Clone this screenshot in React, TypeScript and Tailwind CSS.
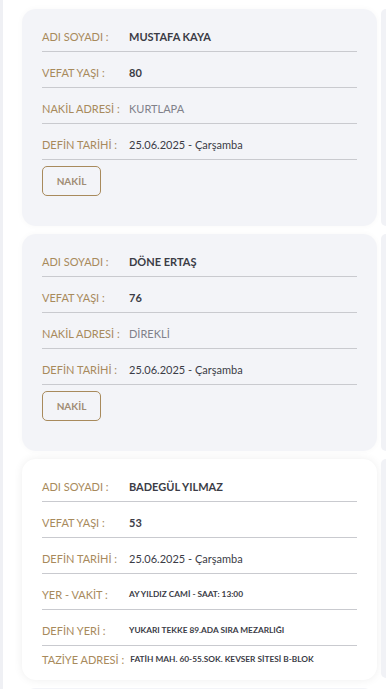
import * as React from "react";

type Row = {
    label: string;
    value: string;
    kind?: "bold" | "light" | "date" | "small";
};

const cards: { rows: Row[]; button?: boolean; white?: boolean }[] = [
    {
        rows: [
            { label: "ADI SOYADI :", value: "MUSTAFA KAYA" },
            { label: "VEFAT YAŞI :", value: "80" },
            { label: "NAKİL ADRESİ :", value: "KURTLAPA", kind: "light" },
            { label: "DEFİN TARİHİ :", value: "25.06.2025 - Çarşamba", kind: "date" },
        ],
        button: true,
    },
    {
        rows: [
            { label: "ADI SOYADI :", value: "DÖNE ERTAŞ" },
            { label: "VEFAT YAŞI :", value: "76" },
            { label: "NAKİL ADRESİ :", value: "DİREKLİ", kind: "light" },
            { label: "DEFİN TARİHİ :", value: "25.06.2025 - Çarşamba", kind: "date" },
        ],
        button: true,
    },
    {
        rows: [
            { label: "ADI SOYADI :", value: "BADEGÜL YILMAZ" },
            { label: "VEFAT YAŞI :", value: "53" },
            { label: "DEFİN TARİHİ :", value: "25.06.2025 - Çarşamba", kind: "date" },
            { label: "YER - VAKİT :", value: "AY YILDIZ CAMİ - SAAT: 13:00", kind: "small" },
            { label: "DEFİN YERİ :", value: "YUKARI TEKKE 89.ADA SIRA MEZARLIĞI", kind: "small" },
            { label: "TAZİYE ADRESİ :", value: "FATİH MAH. 60-55.SOK. KEVSER SİTESİ B-BLOK", kind: "small" },
        ],
        white: true,
    },
];

const valueClass = {
    bold: "text-[11px] font-bold text-[#3b3c46]",
    light: "text-[11px] font-normal text-[#80818a]",
    date: "text-[11px] font-normal text-[#3b3c46]",
    small: "text-[8.3px] font-bold text-[#3b3c46]",
};

function InfoRow({ row, last, big }: { row: Row; last: boolean; big: boolean }) {
    const tail = last && big;
    return (
        <div
            className={
                tail
                    ? "flex items-center h-[13px] pt-[7px] box-content leading-[13px]"
                    : "flex items-center h-[13px] pt-[14px] pb-[8px] box-content border-b border-[#c9cacf] leading-[13px]"
            }
        >
            <span
                className={
                    tail
                        ? "shrink-0 mr-[6px] text-[11px] text-[#a88a5c] whitespace-nowrap"
                        : "w-[87px] shrink-0 text-[11px] text-[#a88a5c] whitespace-nowrap"
                }
            >
                {row.label}
            </span>
            <span className={"whitespace-nowrap " + valueClass[row.kind ?? "bold"]}>{row.value}</span>
        </div>
    );
}

function Card({ rows, button, white }: { rows: Row[]; button?: boolean; white?: boolean }) {
    return (
        <div
            className={
                white
                    ? "shrink-0 rounded-[14px] bg-white px-5 pt-[7px] pb-[14px] shadow-[0_0_10px_rgba(0,0,0,0.07)]"
                    : "shrink-0 rounded-[14px] bg-[#f3f4f8] px-5 pt-[7px] pb-[30px] shadow-[0_0_6px_rgba(0,0,0,0.03)]"
            }
        >
            {rows.map((r, i) => (
                <InfoRow key={i} row={r} last={i === rows.length - 1} big={!!white} />
            ))}
            {button && (
                <button className="mt-[6px] block h-[30px] w-[59px] rounded-[5px] border border-[#a88a5c] text-[10px] font-bold leading-none text-[#a08c74]">
                    NAKİL
                </button>
            )}
        </div>
    );
}

export default function App() {
    return (
        <div
            className="flex w-[386px] h-[689px] overflow-hidden bg-white"
            style={{ fontFamily: "Lato, 'Noto Sans', sans-serif" }}
        >
            {/* previous column edge */}
            <div className="w-[3px] shrink-0 bg-[#eff0f4]" />

            <div className="ml-[19px] w-[355px] shrink-0 flex flex-col gap-2 pt-[9px]">
                {cards.map((c, i) => (
                    <Card key={i} {...c} />
                ))}
                <div className="h-[40px] shrink-0 rounded-[14px] bg-[#f3f4f8]" />
            </div>

            {/* next column edge */}
            <div className="ml-[4px] flex-1 flex flex-col gap-2 pt-[9px]">
                <div className="h-[217px] shrink-0 rounded-l-[12px] bg-[#f1f2f6]" />
                <div className="h-[217px] shrink-0 rounded-l-[12px] bg-[#f1f2f6]" />
                <div className="h-[219px] shrink-0 rounded-l-[12px] bg-[#f1f2f6]" />
            </div>
        </div>
    );
}
